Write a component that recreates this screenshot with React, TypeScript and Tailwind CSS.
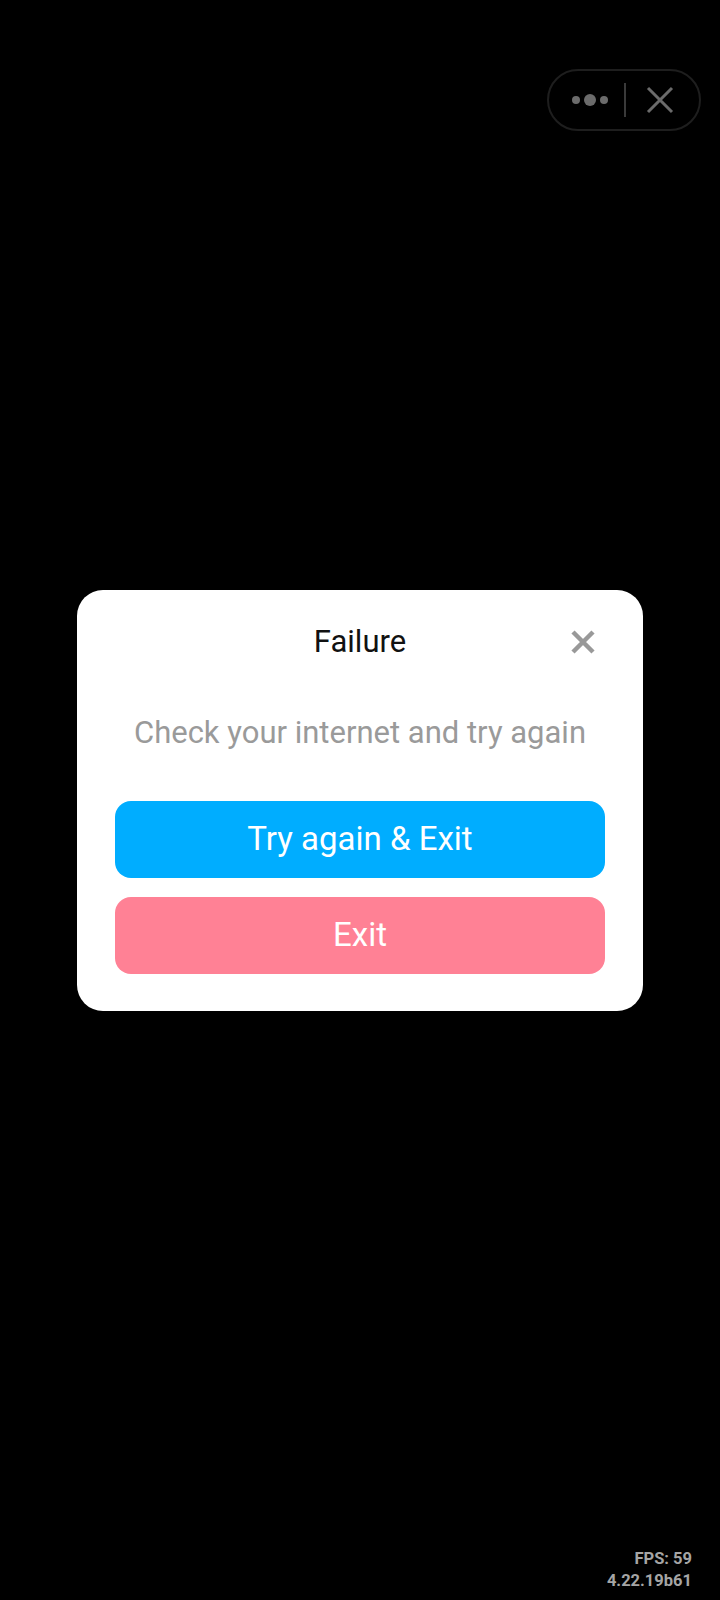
import React from 'react';

const font = { fontFamily: 'Roboto, "Noto Sans", sans-serif' };

const Capsule: React.FC = () => (
  <div className="absolute top-[69px] right-[19px] flex h-[62px] w-[154px] items-center rounded-full border-2 border-[#1e1e1e]">
    {/* more dots */}
    <div className="flex w-[75px] items-center justify-center gap-[4px] pl-[6px]">
      <span className="h-[8px] w-[8px] rounded-full bg-[#6b6b6b]" />
      <span className="h-[12px] w-[12px] rounded-full bg-[#6b6b6b]" />
      <span className="h-[8px] w-[8px] rounded-full bg-[#6b6b6b]" />
    </div>
    <div className="h-[34px] w-[2px] bg-[#3a3a3a]" />
    <div className="flex flex-1 items-center justify-center pr-[6px]">
      <svg width="28" height="28" viewBox="0 0 28 28">
        <path d="M2 2 L26 26 M26 2 L2 26" stroke="#6b6b6b" strokeWidth="3" />
      </svg>
    </div>
  </div>
);

const FailureDialog: React.FC = () => (
  <div className="w-[566px] rounded-[26px] bg-white px-[38px] pt-[34px] pb-[37px]" style={font}>
    {/* Header */}
    <div className="relative flex h-[36px] items-center justify-center">
      <span className="text-[31px] leading-none text-[#111111]">Failure</span>
      <button className="absolute right-[10px] top-1/2 -translate-y-1/2">
        <svg width="24" height="24" viewBox="0 0 24 24">
          <path d="M2 2 L22 22 M22 2 L2 22" stroke="#999999" strokeWidth="4.5" />
        </svg>
      </button>
    </div>

    {/* Message */}
    <div className="mt-[53px] flex h-[40px] items-center justify-center">
      <span className="text-[31px] leading-none text-[#9a9a9a]">Check your internet and try again</span>
    </div>

    {/* Actions */}
    <div className="mt-[48px] flex flex-col gap-[19px]">
      <button className="flex h-[77px] items-center justify-center rounded-[16px] bg-[#00adff] text-[33px] text-white">
        Try again &amp; Exit
      </button>
      <button className="flex h-[77px] items-center justify-center rounded-[16px] bg-[#ff8195] text-[33px] text-white">
        Exit
      </button>
    </div>
  </div>
);

export default function App() {
  return (
    <div className="relative flex h-[1600px] w-full items-center justify-center bg-black">
      <Capsule />
      <FailureDialog />
      <div
        className="absolute bottom-[8px] right-[28px] text-right text-[16.5px] font-bold leading-[22px] text-[#a5a5a5]"
        style={font}
      >
        <div>FPS: 59</div>
        <div>4.22.19b61</div>
      </div>
    </div>
  );
}
